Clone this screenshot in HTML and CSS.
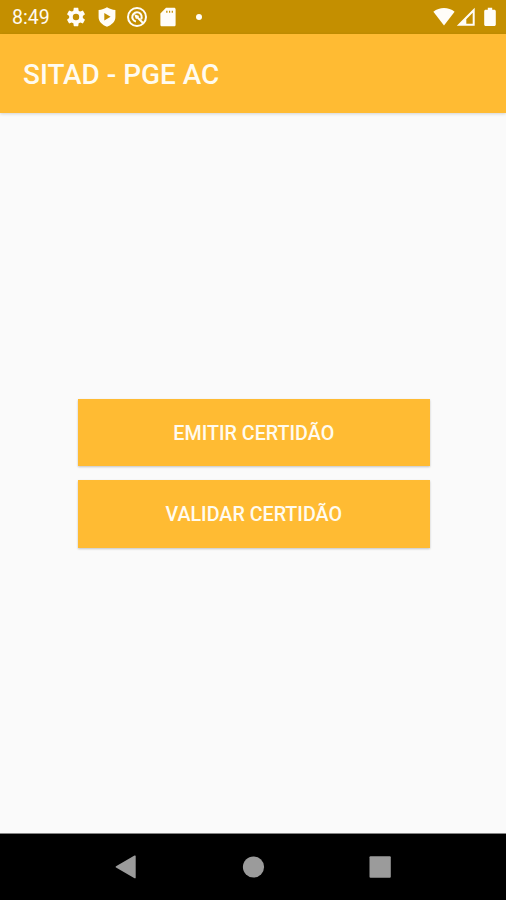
FILE: index.html
```html
<!DOCTYPE html>
<html lang="pt-BR">
<head>
<meta charset="utf-8">
<title>SITAD - PGE AC</title>
<link rel="stylesheet" href="styles.css">
</head>
<body>
<div class="screen">
  <div class="status">
    <span class="time">8:49</span>
    <div class="notifications">
      <svg class="gear" width="22" height="22" viewBox="0 0 24 24"><path fill-rule="evenodd" d="M19.43 12.98c.04-.32.07-.64.07-.98s-.03-.66-.07-.98l2.11-1.65c.19-.15.24-.42.12-.64l-2-3.46c-.12-.22-.39-.3-.61-.22l-2.49 1c-.52-.4-1.08-.73-1.69-.98l-.38-2.65C14.46 2.180 14.250 2 14 2h-4c-.25 0-.46.18-.49.42l-.38 2.65c-.61.25-1.17.59-1.690.98l-2.49-1c-.23-.09-.49 0-.61.22l-2 3.46c-.13.22-.07.49.12.64l2.110 1.650c-.04.32-.07.65-.07.98s.03.66.07.98l-2.110 1.650c-.19.15-.24.42-.12.64l2 3.460c.12.22.39.3.61.22l2.490-1c.52.4 1.080.73 1.690.98l.38 2.650c.03.24.24.42.49.42h4c.25 0 .46-.18.49-.42l.38-2.650c.61-.25 1.170-.59 1.690-.98l2.490 1c.23.09.49 0 .61-.22l2-3.460c.12-.22.07-.49-.12-.64l-2.110-1.650zM12 15.500a3.500 3.500 0 1 1 0-7 3.500 3.500 0 0 1 0 7z"/></svg>
      <svg class="shield" width="18" height="20" viewBox="0 0 18 20"><path fill-rule="evenodd" d="M9 .3C6.600 1.800 3.800 2.800.6 3v7c0 4.700 3.700 8 8.400 9.700 4.700-1.700 8.400-5 8.400-9.700V3C14.200 2.800 11.400 1.800 9 .3zM6.300 6v7.400l6.300-3.700z"/></svg>
      <svg class="compass" width="22" height="22" viewBox="0 0 22 22"><g class="outline"><circle cx="11" cy="11" r="9"/><path d="M10 15.600a4.700 4.700 0 1 1 5.100-2.300M9.500 9.500l8 8"/></g><path d="M8.300 8.300l5 1.700-3.300 3.300z"/></svg>
      <svg class="sdcard" width="16" height="20" viewBox="0 0 16 20"><path fill-rule="evenodd" d="M6 .8h8c1 0 1.600.6 1.600 1.500v15.400c0 1-.6 1.500-1.600 1.500H2c-1 0-1.600-.5-1.600-1.500V6.500zM6.200 3.800v2h1.300v-2zM9 3.800v2h1.200v-2zM11.700 3.800v2h1.200v-2z"/></svg>
      <span class="dot"></span>
    </div>
    <div class="system">
      <svg width="22" height="20" viewBox="0 0 22 20"><path d="M.4 4.700C6.500-.2 15.500-.2 21.600 4.700L11 18.500z"/></svg>
      <svg class="signal" width="20" height="20" viewBox="0 0 20 20"><path fill-rule="evenodd" d="M.8 18.700L18.700.8v17.900zM10.300 12.200v4.500h6.400V5.800z"/></svg>
      <svg class="battery" width="12" height="20" viewBox="0 0 12 20"><path d="M3.800.8h4.400v2h2.100c.9 0 1.500.6 1.500 1.500v13.200c0 .9-.6 1.500-1.500 1.500H1.700c-.9 0-1.500-.6-1.500-1.500V4.300c0-.9.6-1.500 1.500-1.500h2.100z"/></svg>
    </div>
  </div>
  <header class="appbar"><h1>SITAD - PGE AC</h1></header>
  <main class="content">
    <button class="action" type="button">EMITIR CERTIDÃO</button>
    <button class="action" type="button">VALIDAR CERTIDÃO</button>
  </main>
  <nav class="navbar">
    <svg width="24" height="24" viewBox="0 0 24 24"><path d="M2 11.200L20.500.6q1.200-.5 1.200.6v21.500q0 1-1.200.5L2 12.600q-1-.7 0-1.400z"/></svg>
    <svg width="24" height="24" viewBox="0 0 24 24"><circle cx="12.500" cy="12" r="10.600"/></svg>
    <svg width="24" height="24" viewBox="0 0 24 24"><rect x="1.500" y="1.200" width="21.300" height="21.500" rx="1"/></svg>
  </nav>
</div>
</body>
</html>
```
FILE: styles.css
```css
body {
  margin: 0;
  font-family: Roboto, "Liberation Sans", sans-serif;
}

.screen {
  display: flex;
  flex-direction: column;
  height: 900px;
  background: #fafafa;
}

svg {
  display: block;
  flex: none;
}

.status {
  display: flex;
  align-items: center;
  box-sizing: border-box;
  height: 34px;
  padding: 0 10px 0 12px;
  background: #c48f00;
  color: #fffaf0;
  fill: #fffdf8;
}

.time {
  width: 52px;
  padding-top: 2px;
  font-size: 19.5px;
  line-height: 34px;
}

.notifications,
.system {
  display: flex;
  align-items: center;
}

.gear {
  margin-left: 0.5px;
}

.shield {
  margin-left: 11px;
}

.compass {
  margin-left: 10.5px;
}

.outline {
  fill: none;
  stroke: #fffdf8;
  stroke-width: 2;
}

.sdcard {
  margin-left: 12px;
}

.dot {
  width: 6px;
  height: 6px;
  margin-left: 20px;
  border-radius: 50%;
  background: #fffdf8;
}

.system {
  margin-left: auto;
}

.signal {
  margin-left: 1px;
}

.battery {
  margin-left: 8px;
}

.appbar {
  display: flex;
  align-items: center;
  height: 79px;
  padding-left: 23px;
  background: #ffbb33;
  box-shadow: 0 1px 3px rgba(0, 0, 0, 0.16);
}

.appbar h1 {
  margin: 3px 0 0;
  color: #fffbf0;
  font-size: 27.9px;
  font-weight: 500;
  line-height: 36px;
}

.content {
  flex: 1;
  display: flex;
  flex-direction: column;
  justify-content: center;
  gap: 14px;
  padding: 0 76.5px 0 78px;
}

.action {
  height: 67.5px;
  padding: 2px 0 0;
  border: 0;
  background: #ffbb33;
  box-shadow: 0 1px 2px rgba(0, 0, 0, 0.22);
  color: #fffbf0;
  font-family: inherit;
  font-size: 19.7px;
  font-weight: 500;
}

.navbar {
  display: flex;
  justify-content: center;
  align-items: center;
  gap: 103px;
  height: 66px;
  border-top: 1px solid #858585;
  background: #000;
  fill: #9b9b9b;
}
```
